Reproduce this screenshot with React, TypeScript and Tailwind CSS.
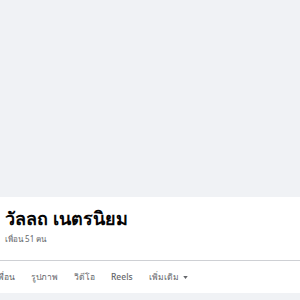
import React from 'react';

const tabs = ['เพื่อน', 'รูปภาพ', 'วิดีโอ', 'Reels'];

const App: React.FC = () => {
  return (
    <div className="w-[300px] h-[300px] overflow-hidden bg-[#f0f2f5] flex flex-col" style={{ fontFamily: '"Noto Sans", "Liberation Sans", sans-serif' }}>
      <div className="h-[197px] bg-[#f0f2f5]" />
      <div className="bg-white flex flex-col">
        <div className="px-[5px] pt-[9px] h-[63px]">
          <h1 className="text-[18px] leading-[24px] font-bold text-[#050505]">วัลลถ เนตรนิยม</h1>
          <p className="text-[8px] leading-[11px] text-[#65676b] mt-[3px]">เพื่อน 51 คน</p>
        </div>
        <div className="border-t border-[#ced0d4] h-[33px] flex items-center text-[8.5px] font-medium text-[#65676b] whitespace-nowrap">
          <div className="flex items-center gap-[16px] -ml-[5px]">
            {tabs.map((t) => (
              <span key={t}>{t}</span>
            ))}
            <span className="flex items-center gap-[4px]">
              เพิ่มเติม
              <svg width="5" height="3" viewBox="0 0 6 4"><path d="M0 0h6L3 4z" fill="#65676b" /></svg>
            </span>
          </div>
        </div>
      </div>
    </div>
  );
};

export default App;
